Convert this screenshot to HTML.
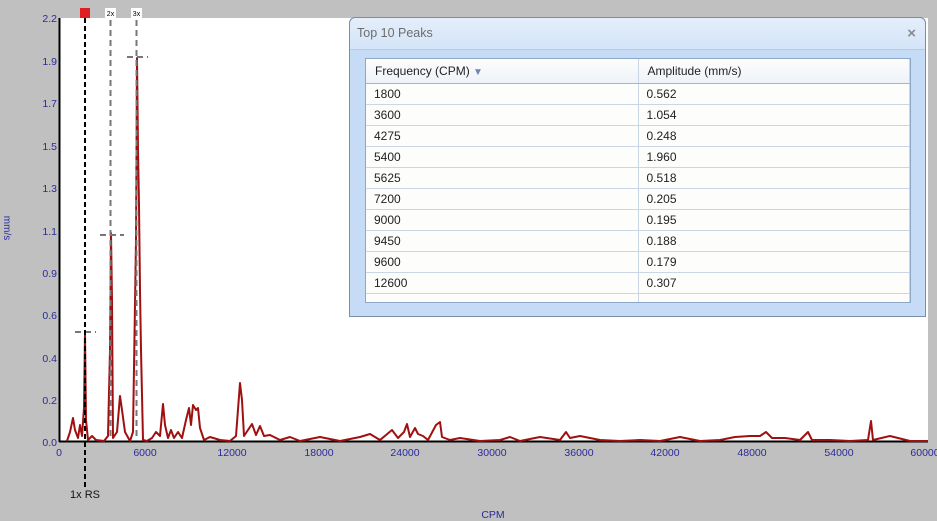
<!DOCTYPE html>
<html><head><meta charset="utf-8"><style>
body{margin:0;width:937px;height:521px;background:#c0c0c0;overflow:hidden;position:relative;font-family:"Liberation Sans",sans-serif;}
svg{position:absolute;left:0;top:0}
.dlg{position:absolute;left:349px;top:17px;width:577px;height:300px;background:#c6dcf6;border:1px solid #7a8ea8;border-radius:6px 6px 0 0;box-sizing:border-box}
.tb{height:31px;background:linear-gradient(#e4eefb,#d4e4f7);border-bottom:1px solid #b6cbe6;border-radius:6px 6px 0 0;color:#6d6d6d;font-size:12.5px;line-height:31px;padding-left:7px;position:relative}
.tb .x{position:absolute;right:9px;top:0;color:#8a8a8a;font-size:15px;font-weight:bold}
.tbl{position:absolute;left:15px;top:40px;width:546px;height:245px;background:#fdfdfb;border:1px solid #8fa7c7;box-sizing:border-box;overflow:hidden}
table{border-collapse:collapse;width:100%;font-size:12px;color:#222}
th{height:24px;padding:0 0 0 9px;font-weight:normal;text-align:left;background:linear-gradient(#fdfdfd,#eef2f8);border-bottom:1px solid #9fb6d4;border-right:1px solid #c9d6e6;box-sizing:border-box}
td{height:21px;padding:0 0 0 8px;line-height:20px;border-bottom:1px solid #c9d6e6;border-right:1px solid #c9d6e6;box-sizing:border-box}
.c1{width:272px}
</style></head><body>
<svg width="937" height="521" font-family="Liberation Sans, sans-serif">
<rect x="60" y="18" width="868" height="423" fill="#fff"/>
<line x1="59.5" y1="18" x2="59.5" y2="442" stroke="#000" stroke-width="2"/>
<line x1="59" y1="441.5" x2="928" y2="441.5" stroke="#000" stroke-width="2"/>
<g fill="#2a2a9a" font-size="10.5" text-anchor="end">
<text x="57" y="22">2.2</text><text x="57" y="65">1.9</text><text x="57" y="107">1.7</text><text x="57" y="150">1.5</text><text x="57" y="192">1.3</text><text x="57" y="235">1.1</text><text x="57" y="277">0.9</text><text x="57" y="319">0.6</text><text x="57" y="362">0.4</text><text x="57" y="404">0.2</text><text x="57" y="446">0.0</text>
</g>
<g fill="#2a2a9a" font-size="10.5" text-anchor="middle">
<text x="59" y="456">0</text><text x="145" y="456">6000</text><text x="232" y="456">12000</text><text x="319" y="456">18000</text><text x="405" y="456">24000</text><text x="492" y="456">30000</text><text x="579" y="456">36000</text><text x="665" y="456">42000</text><text x="752" y="456">48000</text><text x="839" y="456">54000</text><text x="925" y="456">60000</text>
<text x="493" y="518">CPM</text>
<text transform="translate(4,228) rotate(90)" font-size="10">mm/s</text>
</g>
<polyline fill="none" stroke="#a01010" stroke-width="2" stroke-linejoin="round" points="67,441 70,432 73,418 75,430 78,438 80,425 82,436 84,408 85,333 86,420 88,440 92,436 96,440 104,441 108,436 110,350 111,233 112,300 113,438 117,432 120,396 122,410 125,432 130,441 133,432 136,240 137,58 138,150 139,205 140,290 141,350 143,440 147,441 152,438 156,432 160,436 163,404 165,425 168,438 171,430 174,438 178,432 182,438 186,420 189,408 191,425 193,405 196,410 198,408 200,428 204,440 210,437 220,440 230,441 236,436 240,383 242,400 244,436 248,430 252,424 256,435 260,426 264,436 270,435 280,440 290,437 300,441 320,437 340,441 360,437 370,434 380,440 392,430 398,438 404,432 407,424 410,437 415,428 418,434 423,436 428,440 436,425 440,422 442,437 450,440 460,438 480,441 500,440 510,437 520,441 540,437 560,440 566,432 570,438 580,436 600,440 620,441 640,440 660,441 680,437 700,441 720,440 735,437 750,436 760,436 766,432 772,438 785,438 800,440 808,432 812,440 830,440 850,441 868,440 871,421 873,440 890,436 910,441 928,441"/>
<g stroke="#777" stroke-width="2" stroke-dasharray="6,4">
<line x1="75" y1="332" x2="96" y2="332"/><line x1="100" y1="235" x2="124" y2="235"/><line x1="127" y1="57" x2="148" y2="57"/>
<line x1="110.5" y1="20" x2="110.5" y2="441"/><line x1="136.5" y1="20" x2="136.5" y2="441"/>
</g>
<line x1="85" y1="18" x2="85" y2="488" stroke="#000" stroke-width="2" stroke-dasharray="5,3"/>
<rect x="80" y="8" width="10" height="10" fill="#e02020"/>
<rect x="105" y="8" width="11" height="10" fill="#fff"/><text x="110.5" y="16" font-size="7" text-anchor="middle">2x</text>
<rect x="131" y="8" width="11" height="10" fill="#fff"/><text x="136.5" y="16" font-size="7" text-anchor="middle">3x</text>
<text x="85" y="498" font-size="11" text-anchor="middle" fill="#111">1x RS</text>
</svg>
<div class="dlg"><div class="tb">Top 10 Peaks<span class="x">×</span></div>
<div class="tbl"><table>
<tr><th class="c1">Frequency (CPM) <span style="color:#6b86b0;font-size:10px">▼</span></th><th>Amplitude (mm/s)</th></tr>
<tr><td>1800</td><td>0.562</td></tr><tr><td>3600</td><td>1.054</td></tr><tr><td>4275</td><td>0.248</td></tr><tr><td>5400</td><td>1.960</td></tr><tr><td>5625</td><td>0.518</td></tr><tr><td>7200</td><td>0.205</td></tr><tr><td>9000</td><td>0.195</td></tr><tr><td>9450</td><td>0.188</td></tr><tr><td>9600</td><td>0.179</td></tr><tr><td>12600</td><td>0.307</td></tr><tr><td style="border-bottom:none"></td><td style="border-bottom:none"></td></tr>
</table></div></div>
</body></html>
